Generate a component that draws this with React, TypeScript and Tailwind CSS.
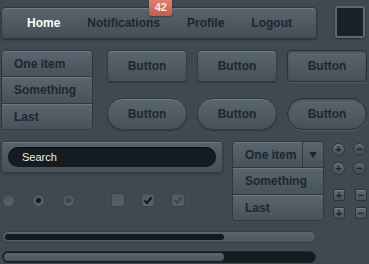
import React from "react";

const font = { fontFamily: '"Liberation Sans", Arial, sans-serif' };

function Circle({ children, dark }: { children: React.ReactNode; dark?: boolean }) {
  return (
    <div
      className={`w-[13px] h-[13px] rounded-full flex items-center justify-center text-[11px] font-bold leading-none border border-[#2c353b] ${
        dark ? "bg-gradient-to-b from-[#56626a] to-[#3f4a52] text-[#1a2328]" : "bg-gradient-to-b from-[#5f6b74] to-[#48535b] text-[#1a2328]"
      } shadow-[inset_0_1px_0_rgba(255,255,255,0.15)]`}
    >
      {children}
    </div>
  );
}

function Sq({ children }: { children: React.ReactNode }) {
  return (
    <div className="w-[12px] h-[12px] rounded-[2px] flex items-center justify-center text-[11px] font-bold leading-none border border-[#2c353b] bg-gradient-to-b from-[#5f6b74] to-[#48535b] text-[#1a2328] shadow-[inset_0_1px_0_rgba(255,255,255,0.15)]">
      {children}
    </div>
  );
}

export default function App() {
  const row =
    "flex items-center pl-[12px] text-[12px] font-bold text-[#1c262d] bg-gradient-to-b from-[#5a666f] to-[#47525b] shadow-[inset_0_1px_0_rgba(255,255,255,0.12)]";
  const btn =
    "w-[80px] h-[32px] flex items-center justify-center text-[12px] font-bold text-[#1c262d] border border-[#323c43] bg-gradient-to-b from-[#5a666f] to-[#46515a] shadow-[inset_0_1px_0_rgba(255,255,255,0.15),0_1px_1px_rgba(0,0,0,0.3)]";
  return (
    <div style={font} className="w-[369px] h-[264px] bg-[#3e4952] overflow-hidden flex flex-col">
      {/* Row 1 */}
      <div className="flex mt-[7px] h-[32px]">
        <div className="ml-[1px] w-[316px] h-[32px] rounded-[4px] border border-[#313a41] bg-gradient-to-b from-[#59656e] to-[#434e57] shadow-[inset_0_1px_0_rgba(255,255,255,0.15),0_1px_2px_rgba(0,0,0,0.35)] flex items-center pl-[25px] gap-[27px] text-[12px] font-bold">
          <span className="text-white">Home</span>
          <span className="relative text-[#1c262d]">
            Notifications
            <span className="absolute left-[62px] top-[-16px] w-[23px] h-[18px] rounded-[3px] bg-gradient-to-b from-[#e9806f] to-[#c75b4b] text-[#fbe9e6] text-[11px] font-bold flex items-center justify-center shadow-[0_1px_2px_rgba(0,0,0,0.4)]">
              42
            </span>
          </span>
          <span className="text-[#1c262d]">Profile</span>
          <span className="text-[#1c262d]">Logout</span>
        </div>
        <div className="ml-[18px] w-[30px] h-[32px] -mt-[1px] rounded-[2px] border-[2px] border-[#5d6870] bg-[#1b2227] shadow-[0_1px_2px_rgba(0,0,0,0.4)]" />
      </div>

      {/* Row 2 */}
      <div className="flex mt-[11px] h-[80px]">
        <div className="ml-[1px] w-[92px] h-[80px] rounded-[4px] border border-[#2f383f] overflow-hidden flex flex-col">
          <div className={`${row} h-[26px] border-b border-[#2f383f]`}>One item</div>
          <div className={`${row} h-[27px] border-b border-[#2f383f]`}>Something</div>
          <div className={`${row} flex-1`}>Last</div>
        </div>
        <div className="ml-[14px] flex flex-col gap-[16px]">
          <div className="flex gap-[10px]">
            <div className={`${btn} rounded-[4px]`}>Button</div>
            <div className={`${btn} rounded-[4px]`}>Button</div>
            <div className={`${btn} rounded-[4px] border-[#283137] from-[#4f5b64] to-[#4a555e] shadow-[inset_0_1px_2px_rgba(0,0,0,0.3),0_1px_0_rgba(255,255,255,0.1)]`}>Button</div>
          </div>
          <div className="flex gap-[10px]">
            <div className={`${btn} rounded-full`}>Button</div>
            <div className={`${btn} rounded-full`}>Button</div>
            <div className={`${btn} rounded-full border-[#283137] from-[#4f5b64] to-[#4a555e] shadow-[inset_0_1px_2px_rgba(0,0,0,0.3),0_1px_0_rgba(255,255,255,0.1)]`}>Button</div>
          </div>
        </div>
      </div>

      {/* Row 3 */}
      <div className="flex mt-[11px] h-[80px]">
        <div className="ml-[1px] w-[222px] flex flex-col">
          <div className="h-[32px] rounded-[3px] border border-[#343e45] bg-gradient-to-b from-[#58646d] to-[#45505a] shadow-[inset_0_1px_0_rgba(255,255,255,0.15),0_1px_2px_rgba(0,0,0,0.3)] flex items-center px-[6px]">
            <div className="w-full h-[20px] rounded-full bg-[#151c20] shadow-[inset_0_1px_2px_rgba(0,0,0,0.6)] flex items-center pl-[14px] text-[11px] text-[#e9eef0]">
              Search
            </div>
          </div>
          <div className="flex items-center mt-[20px] h-[14px]">
            <div className="ml-[1px] w-[13px] h-[13px] rounded-full bg-gradient-to-b from-[#4c5760] to-[#56616a] border border-[#38424a]" />
            <div className="ml-[17px] w-[13px] h-[13px] rounded-full bg-gradient-to-b from-[#4c5760] to-[#56616a] border border-[#38424a] flex items-center justify-center">
              <div className="w-[5px] h-[5px] rounded-full bg-[#11181c]" />
            </div>
            <div className="ml-[17px] w-[13px] h-[13px] rounded-full bg-gradient-to-b from-[#4c5760] to-[#56616a] border border-[#38424a] flex items-center justify-center">
              <div className="w-[5px] h-[5px] rounded-full bg-[#3a444c]" />
            </div>
            <div className="ml-[36px] w-[14px] h-[14px] rounded-[3px] bg-gradient-to-b from-[#4f5a63] to-[#56616a] border border-[#38424a]" />
            <div className="ml-[16px] w-[14px] h-[14px] rounded-[3px] bg-gradient-to-b from-[#4f5a63] to-[#56616a] border border-[#38424a] flex items-center justify-center">
              <svg width="10" height="9" viewBox="0 0 10 9"><path d="M1.5 4.5 L4 7 L8.5 1.5" stroke="#11181c" strokeWidth="2" fill="none" /></svg>
            </div>
            <div className="ml-[16px] w-[14px] h-[14px] rounded-[3px] bg-gradient-to-b from-[#4f5a63] to-[#56616a] border border-[#38424a] flex items-center justify-center">
              <svg width="10" height="9" viewBox="0 0 10 9"><path d="M1.5 4.5 L4 7 L8.5 1.5" stroke="#3b454d" strokeWidth="2" fill="none" /></svg>
            </div>
          </div>
        </div>
        <div className="ml-[9px] w-[92px] h-[80px] rounded-[4px] border border-[#2f383f] overflow-hidden flex flex-col">
          <div className="flex h-[26px] border-b border-[#2f383f]">
            <div className={`${row} flex-1 pl-[11px]`}>One item</div>
            <div className="w-[21px] border-l border-[#2f383f] bg-gradient-to-b from-[#5a666f] to-[#47525b] flex items-center justify-center">
              <svg width="8" height="6" viewBox="0 0 8 6"><path d="M0 0 H8 L4 6 Z" fill="#1c262d" /></svg>
            </div>
          </div>
          <div className={`${row} h-[27px] pl-[11px] border-b border-[#2f383f]`}>Something</div>
          <div className={`${row} flex-1 pl-[11px]`}>Last</div>
        </div>
        <div className="ml-[8px] flex flex-col">
          <div className="flex gap-[8px] mt-[2px]">
            <Circle>+</Circle>
            <Circle dark>−</Circle>
          </div>
          <div className="flex gap-[8px] mt-[6px]">
            <Circle>+</Circle>
            <Circle dark>−</Circle>
          </div>
          <div className="flex gap-[10px] mt-[14px] ml-[1px]">
            <Sq>+</Sq>
            <Sq>−</Sq>
          </div>
          <div className="flex gap-[10px] mt-[6px] ml-[1px]">
            <Sq>+</Sq>
            <Sq>−</Sq>
          </div>
        </div>
      </div>

      {/* Row 4 */}
      <div className="ml-[2px] mt-[10px] flex flex-col gap-[8px] w-[314px]">
        <div className="h-[12px] rounded-full bg-gradient-to-b from-[#5b666f] to-[#4a555d] border border-[#343e45] p-[2px]">
          <div className="h-full w-[219px] rounded-full bg-[#121a1e]" />
        </div>
        <div className="h-[12px] rounded-full bg-[#141b1f] border border-[#20282d] p-[1px]">
          <div className="h-full w-[220px] rounded-full bg-gradient-to-b from-[#5b666f] to-[#4a555d]" />
        </div>
      </div>
    </div>
  );
}
